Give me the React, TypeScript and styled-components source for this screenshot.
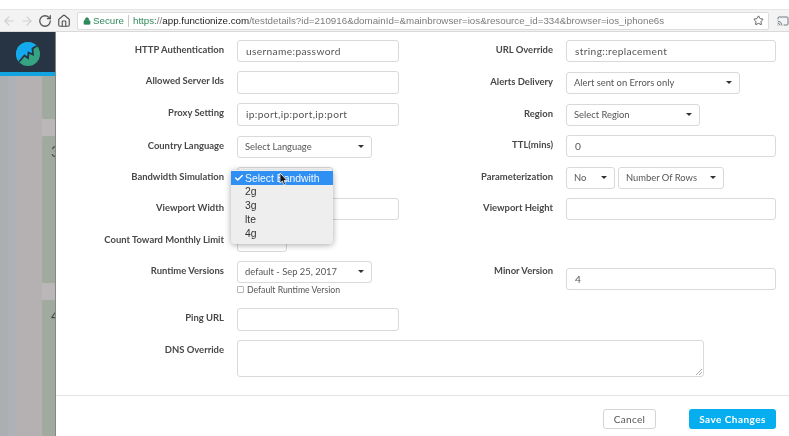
import styled, { createGlobalStyle } from "styled-components";
import { ArrowLeft, ArrowRight, RotateCw, House, Lock, Star, Cast, Check } from "lucide-react";

const Global = createGlobalStyle`
  html, body {
    margin: 0;
    padding: 0;
    background: #fff;
    overflow: hidden;
  }
  * { box-sizing: border-box; }
`;

const Page = styled.div`
  width: 789px;
  height: 436px;
  position: relative;
  overflow: hidden;
  display: flex;
  flex-direction: column;
  padding-top: 9px;
  font-family: Lato, "Open Sans", sans-serif;
  filter: blur(0.3px);
`;

const Toolbar = styled.div`
  height: 23px;
  flex: none;
  display: flex;
  align-items: center;
  background: #f3f3f3;
  border-top: 1px solid #e6e6e6;
  border-bottom: 1px solid #d9d9d9;
  padding-left: 2px;
`;

const NavButton = styled.span<{ $dim?: boolean; $gap: number }>`
  display: flex;
  width: 14px;
  margin-right: ${(p) => p.$gap}px;
  color: ${(p) => (p.$dim ? "#cfcfcf" : "#555")};
`;

const UrlBox = styled.div`
  width: 692px;
  height: 18px;
  display: flex;
  align-items: center;
  background: #fff;
  border: 1px solid #dcdcdc;
  border-radius: 2px;
  padding-left: 5px;
  font-family: "Liberation Sans", sans-serif;
  font-size: 9.77px;
  white-space: nowrap;
  color: #7c7c7c;
`;

const Secure = styled.span`
  color: #2f8a5b;
  margin-left: 2px;
`;

const Divider = styled.span`
  width: 1px;
  height: 12px;
  background: #c8c8c8;
  margin: 0 4px;
`;

const UrlGreen = styled.span`
  color: #2f8a5b;
`;

const UrlHost = styled.span`
  color: #222;
`;

const StarSlot = styled.span`
  margin-left: auto;
  margin-right: 4px;
  display: flex;
  color: #555;
`;

const CastSlot = styled.span`
  display: flex;
  margin-left: 8px;
  color: #6b7d86;
`;

const Body = styled.div`
  flex: 1;
  display: flex;
  min-height: 0;
`;

const Sidebar = styled.aside`
  width: 56px;
  flex: none;
  display: flex;
  flex-direction: column;
  border-right: 1px solid #7f8b80;
`;

const Brand = styled.div`
  height: 44px;
  flex: none;
  display: flex;
  align-items: center;
  justify-content: center;
  padding-top: 4px;
  background: #263443;
  border-bottom: 4px solid #12a4e0;
`;

const BehindModal = styled.div`
  flex: 1;
  display: flex;
  background: #b4afb0;
`;

const Stripe = styled.div<{ $w: number; $c: string }>`
  width: ${(p) => p.$w}px;
  background: ${(p) => p.$c};
`;

const CardStrip = styled.div`
  flex: 1;
  display: flex;
  flex-direction: column;
  gap: 17px;
  background: #bbb7b8;
`;

const CardPiece = styled.div<{ $h?: number }>`
  height: ${(p) => (p.$h ? `${p.$h}px` : "auto")};
  flex: ${(p) => (p.$h ? "none" : "1")};
  background: #a0aa9e;
  border-radius: 2px 0 0 2px;
  overflow: hidden;
  display: flex;
  justify-content: flex-end;
  padding-top: 8px;
  font-size: 15px;
  color: #454b4a;
  line-height: 14px;
`;

const Clipped = styled.span`
  display: block;
  width: 4px;
  overflow: hidden;
`;

const Modal = styled.main`
  flex: 1;
  display: flex;
  flex-direction: column;
  background: #fff;
  min-width: 0;
`;

const FormArea = styled.div`
  height: 363px;
  flex: none;
  padding-top: 7.5px;
`;

const Columns = styled.div`
  display: flex;
`;

const Column = styled.div<{ $w: number }>`
  width: ${(p) => p.$w}px;
  flex: none;
  display: flex;
  flex-direction: column;
`;

const Row = styled.div<{ $h: number }>`
  height: ${(p) => p.$h}px;
  flex: none;
  display: flex;
  align-items: flex-start;
`;

const Label = styled.label<{ $w: number; $raised?: boolean }>`
  width: ${(p) => p.$w}px;
  flex: none;
  margin-right: 13px;
  margin-top: ${(p) => (p.$raised ? -4 : 3)}px;
  text-align: right;
  font-size: 9.45px;
  line-height: 14px;
  font-weight: 700;
  color: #484848;
  white-space: nowrap;
`;

const TextField = styled.div<{ $w: number; $h?: number }>`
  width: ${(p) => p.$w}px;
  height: ${(p) => p.$h ?? 22.5}px;
  flex: none;
  position: relative;
  background: #fff;
  border: 1px solid #d9d9d9;
  border-radius: 3px;
  padding: 0 8px;
  display: flex;
  align-items: center;
  font-size: 10.2px;
  letter-spacing: 0.35px;
  color: #555;
`;

const SelectField = styled.div<{ $w: number; $ml?: number }>`
  width: ${(p) => p.$w}px;
  height: 22px;
  flex: none;
  margin-left: ${(p) => p.$ml ?? 0}px;
  background: #fff;
  border: 1px solid #d9d9d9;
  border-radius: 3px;
  padding: 0 7px;
  display: flex;
  align-items: center;
  justify-content: space-between;
  font-size: 9.4px;
  color: #555;
  white-space: nowrap;

  &::after {
    content: "";
    border-left: 3px solid transparent;
    border-right: 3px solid transparent;
    border-top: 3px solid #333;
  }
`;

const Stack = styled.div`
  display: flex;
  flex-direction: column;
`;

const CheckRow = styled.div`
  display: flex;
  align-items: center;
  gap: 3px;
  height: 12px;
  margin-top: 1px;
  font-size: 8.7px;
  color: #555;
  white-space: nowrap;
`;

const CheckBox = styled.span`
  width: 7px;
  height: 7px;
  border: 1px solid #b5b5b5;
  border-radius: 1px;
  background: #fff;
`;

const Grip = styled.svg`
  position: absolute;
  right: 1px;
  bottom: 1px;
`;

const Footer = styled.footer`
  flex: 1;
  display: flex;
  justify-content: flex-end;
  align-items: flex-start;
  gap: 33px;
  padding: 13px 13px 0 0;
  border-top: 1px solid #e2e2e2;
`;

const CancelButton = styled.button`
  width: 53px;
  height: 20px;
  padding: 0;
  background: #fff;
  border: 1px solid #d4d4d4;
  border-radius: 3px;
  font-family: inherit;
  font-size: 10px;
  letter-spacing: 0.3px;
  color: #555;
`;

const SaveButton = styled.button`
  width: 87px;
  height: 20px;
  padding: 0;
  background: #06aeef;
  border: none;
  border-radius: 3px;
  font-family: inherit;
  font-size: 10px;
  font-weight: 700;
  letter-spacing: 0.45px;
  color: #fff;
`;

const Menu = styled.ul`
  position: absolute;
  left: 231px;
  top: 170px;
  width: 102px;
  height: 74px;
  margin: 0;
  padding: 1px 0 0;
  list-style: none;
  background: #efeeef;
  border-radius: 4px;
  box-shadow: 0 1px 6px rgba(0, 0, 0, 0.35);
  font-family: "Liberation Sans", sans-serif;
  font-size: 10.4px;
  color: #333;
`;

const MenuItem = styled.li<{ $active?: boolean }>`
  height: ${(p) => (p.$active ? 14 : 13.8)}px;
  display: flex;
  align-items: center;
  padding-left: 14px;
  position: relative;
  background: ${(p) => (p.$active ? "#2f8ff2" : "transparent")};
  color: ${(p) => (p.$active ? "#f4f8ff" : "#333")};
`;

const Tick = styled.span`
  position: absolute;
  left: 3px;
  top: 2px;
  display: flex;
`;

const Pointer = styled.svg`
  position: absolute;
  left: 279px;
  top: 173px;
`;

const leftRows = [
  { label: "HTTP Authentication", value: "username:password", h: 31.5 },
  { label: "Allowed Server Ids", value: "", h: 32 },
  { label: "Proxy Setting", value: "ip:port,ip:port,ip:port", h: 32.5 },
];

const bandwidth = ["Select Bandwith", "2g", "3g", "lte", "4g"];

const zigzag = "M2 21 8.5 13.5 12 16 12.5 10.5 17 12.5 16.5 6.5 24 2";

const Logo = () => (
  <svg width="24" height="24" viewBox="0 0 24 24">
    <clipPath id="logo-disc">
      <circle cx="12" cy="12" r="12" />
    </clipPath>
    <g clipPath="url(#logo-disc)">
      <rect width="24" height="24" fill="#35a483" />
      <path d={`${zigzag} V0 H0 V21 Z`} fill="#13a9ee" />
      <path d={zigzag} fill="none" stroke="#263443" strokeWidth="1.8" />
    </g>
  </svg>
);

export default function App() {
  return (
    <Page>
      <Global />
      <Toolbar>
        <NavButton $dim $gap={4}>
          <ArrowLeft size={14} />
        </NavButton>
        <NavButton $dim $gap={4}>
          <ArrowRight size={14} />
        </NavButton>
        <NavButton $gap={5}>
          <RotateCw size={14} strokeWidth={2.2} />
        </NavButton>
        <NavButton $gap={6}>
          <House size={14} strokeWidth={2} />
        </NavButton>
        <UrlBox>
          <Lock size={8} color="#2f8a5b" fill="#2f8a5b" />
          <Secure>Secure</Secure>
          <Divider />
          <UrlGreen>https:</UrlGreen>
          //
          <UrlHost>app.functionize.com</UrlHost>
          /testdetails?id=210916&amp;domainId=&amp;mainbrowser=ios&amp;resource_id=334&amp;browser=ios_iphone6s
          <StarSlot>
            <Star size={11} />
          </StarSlot>
        </UrlBox>
        <CastSlot>
          <Cast size={12} />
        </CastSlot>
      </Toolbar>
      <Body>
        <Sidebar>
          <Brand>
            <Logo />
          </Brand>
          <BehindModal>
            <Stripe $w={8} $c="#abafb1" />
            <Stripe $w={8} $c="#aeb1b5" />
            <Stripe $w={26} $c="#b5b0b1" />
            <CardStrip>
              <CardPiece $h={43} />
              <CardPiece $h={147}>
                <Clipped>3</Clipped>
              </CardPiece>
              <CardPiece>
                <Clipped>4</Clipped>
              </CardPiece>
            </CardStrip>
          </BehindModal>
        </Sidebar>
        <Modal>
          <FormArea>
            <Columns>
              <Column $w={343}>
                {leftRows.map((r) => (
                  <Row $h={r.h} key={r.label}>
                    <Label $w={168}>{r.label}</Label>
                    <TextField $w={162}>{r.value}</TextField>
                  </Row>
                ))}
                <Row $h={31}>
                  <Label $w={168}>Country Language</Label>
                  <SelectField $w={135}>Select Language</SelectField>
                </Row>
                <Row $h={31}>
                  <Label $w={168}>Bandwidth Simulation</Label>
                  <SelectField $w={96} />
                </Row>
                <Row $h={32}>
                  <Label $w={168}>Viewport Width</Label>
                  <TextField $w={162} />
                </Row>
                <Row $h={31}>
                  <Label $w={168}>Count Toward Monthly Limit</Label>
                  <SelectField $w={50} />
                </Row>
                <Row $h={47.5}>
                  <Label $w={168}>Runtime Versions</Label>
                  <Stack>
                    <SelectField $w={135}>default - Sep 25, 2017</SelectField>
                    <CheckRow>
                      <CheckBox />
                      Default Runtime Version
                    </CheckRow>
                  </Stack>
                </Row>
              </Column>
              <Column $w={390}>
                <Row $h={32}>
                  <Label $w={154}>URL Override</Label>
                  <TextField $w={210}>string::replacement</TextField>
                </Row>
                <Row $h={32}>
                  <Label $w={154}>Alerts Delivery</Label>
                  <SelectField $w={174}>Alert sent on Errors only</SelectField>
                </Row>
                <Row $h={31}>
                  <Label $w={154}>Region</Label>
                  <SelectField $w={134}>Select Region</SelectField>
                </Row>
                <Row $h={32}>
                  <Label $w={154}>TTL(mins)</Label>
                  <TextField $w={210}>0</TextField>
                </Row>
                <Row $h={31}>
                  <Label $w={154}>Parameterization</Label>
                  <SelectField $w={49}>No</SelectField>
                  <SelectField $w={106} $ml={3}>Number Of Rows</SelectField>
                </Row>
                <Row $h={70}>
                  <Label $w={154}>Viewport Height</Label>
                  <TextField $w={210} />
                </Row>
                <Row $h={32}>
                  <Label $w={154} $raised>Minor Version</Label>
                  <TextField $w={210}>4</TextField>
                </Row>
              </Column>
            </Columns>
            <Row $h={32}>
              <Label $w={168}>Ping URL</Label>
              <TextField $w={162} />
            </Row>
            <Row $h={40}>
              <Label $w={168}>DNS Override</Label>
              <TextField $w={467} $h={37}>
                <Grip width="6" height="6" viewBox="0 0 6 6">
                  <path d="M0 6 6 0M3 6l3-3" stroke="#8a8a8a" strokeWidth="0.7" />
                </Grip>
              </TextField>
            </Row>
          </FormArea>
          <Footer>
            <CancelButton>Cancel</CancelButton>
            <SaveButton>Save Changes</SaveButton>
          </Footer>
        </Modal>
      </Body>
      <Menu>
        {bandwidth.map((b, i) => (
          <MenuItem key={b} $active={i === 0}>
            {i === 0 && (
              <Tick>
                <Check size={10} color="#fff" strokeWidth={3.5} />
              </Tick>
            )}
            {b}
          </MenuItem>
        ))}
      </Menu>
      <Pointer width="9" height="13" viewBox="0 0 9 13">
        <path d="M1 0v10l2.4-2 1.6 4 1.6-.7-1.6-3.8H8z" fill="#111" stroke="#fff" strokeWidth="0.7" />
      </Pointer>
    </Page>
  );
}
